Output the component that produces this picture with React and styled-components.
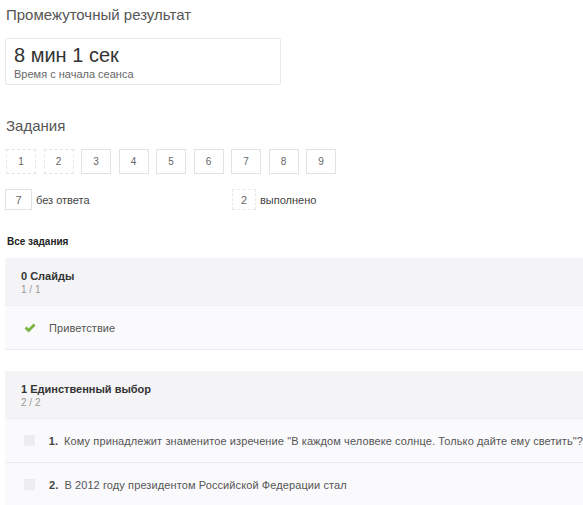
import styled, { createGlobalStyle } from "styled-components";

const tasks = [
  { n: 1, done: true },
  { n: 2, done: true },
  { n: 3 },
  { n: 4 },
  { n: 5 },
  { n: 6 },
  { n: 7 },
  { n: 8 },
  { n: 9 },
];

const sections = [
  {
    title: "0 Слайды",
    count: "1 / 1",
    items: [{ text: "Приветствие", check: true }],
  },
  {
    title: "1 Единственный выбор",
    count: "2 / 2",
    items: [
      {
        num: "1.",
        text: "Кому принадлежит знаменитое изречение \"В каждом человеке солнце. Только дайте ему светить\"?",
      },
      { num: "2.", text: "В 2012 году президентом Российской Федерации стал" },
    ],
  },
];

export default function App() {
  return (
    <>
      <GlobalStyle />
      <Page>
        <Heading>Промежуточный результат</Heading>
        <TimeCard>
          <TimeValue>8 мин 1 сек</TimeValue>
          <TimeLabel>Время с начала сеанса</TimeLabel>
        </TimeCard>

        <Heading $top={32}>Задания</Heading>
        <TaskGrid>
          {tasks.map((t) => (
            <TaskBox key={t.n} $dashed={t.done}>
              {t.n}
            </TaskBox>
          ))}
        </TaskGrid>

        <Legend>
          <LegendItem>
            <LegendBox>7</LegendBox>
            без ответа
          </LegendItem>
          <LegendItem>
            <LegendBox $dashed>2</LegendBox>
            выполнено
          </LegendItem>
        </Legend>

        <AllTitle>Все задания</AllTitle>

        {sections.map((s) => (
          <Section key={s.title}>
            <SectionHead>
              <SectionTitle>{s.title}</SectionTitle>
              <SectionCount>{s.count}</SectionCount>
            </SectionHead>
            {s.items.map((it) => (
              <Row key={it.text}>
                <Mark>
                  {it.check ? (
                    <svg width="12" height="10" viewBox="0 0 12 10">
                      <path
                        d="M0.6 5.4 L2.6 3.4 L4.6 5.4 L9.6 0.4 L11.6 2.4 L4.6 9.4 Z"
                        fill="#7cb342"
                      />
                    </svg>
                  ) : (
                    <Square />
                  )}
                </Mark>
                <RowText>
                  {it.num && <Num>{it.num}</Num>}
                  {it.text}
                </RowText>
              </Row>
            ))}
          </Section>
        ))}
      </Page>
    </>
  );
}

const GlobalStyle = createGlobalStyle`
  body {
    margin: 0;
    background: #fff;
    font-family: "Liberation Sans", Arial, sans-serif;
    color: #333;
    overflow: hidden;
  }
`;

const Page = styled.div`
  padding: 6px 0 0 5px;
  overflow: hidden;
`;

const Heading = styled.div`
  font-size: 15px;
  color: #555;
  line-height: 18px;
  margin: ${(p) => p.$top || 0}px 0 0 1px;
`;

const TimeCard = styled.div`
  width: 258px;
  height: 45px;
  margin-top: 14px;
  border: 1px solid #e8e8e8;
  border-radius: 2px;
  padding: 0 8px;
  display: flex;
  flex-direction: column;
`;

const TimeValue = styled.div`
  font-size: 20px;
  line-height: 22px;
  margin-top: 5px;
  color: #333;
`;

const TimeLabel = styled.div`
  font-size: 11px;
  color: #666;
  margin-top: 2px;
`;

const TaskGrid = styled.div`
  display: flex;
  gap: 7.5px;
  margin-top: 14px;
  padding-left: 1px;
`;

const TaskBox = styled.div`
  width: 30px;
  height: 25px;
  box-sizing: border-box;
  border: 1px ${(p) => (p.$dashed ? "dashed #e4e4e4" : "solid #e2e2e2")};
  display: flex;
  align-items: center;
  justify-content: center;
  font-size: 10px;
  color: #666;
`;

const Legend = styled.div`
  display: grid;
  grid-template-columns: 227px auto;
  margin-top: 15px;
`;

const LegendItem = styled.div`
  display: flex;
  align-items: center;
  gap: 4px;
  font-size: 11px;
  color: #444;
`;

const LegendBox = styled.div`
  width: ${(p) => (p.$dashed ? 24 : 27)}px;
  height: 21px;
  box-sizing: border-box;
  border: 1px ${(p) => (p.$dashed ? "dashed #e8e8e8" : "solid #e2e2e2")};
  display: flex;
  align-items: center;
  justify-content: center;
  font-size: 11px;
  color: #666;
`;

const AllTitle = styled.div`
  font-size: 10px;
  font-weight: bold;
  color: #222;
  margin: 26px 0 0 2px;
`;

const Section = styled.div`
  margin-top: 11px;
  & + & {
    margin-top: 21px;
  }
`;

const SectionHead = styled.div`
  background: #f4f4f6;
  height: 48px;
  box-sizing: border-box;
  padding: 12px 16px 0;
  border-bottom: 1px solid #eeeef0;
`;

const SectionTitle = styled.div`
  font-size: 11px;
  font-weight: bold;
  color: #333;
`;

const SectionCount = styled.div`
  font-size: 10px;
  color: #999;
  margin-top: 2px;
`;

const Row = styled.div`
  background: #fafafc;
  height: 44px;
  box-sizing: border-box;
  border-bottom: 1px solid #ececee;
  display: flex;
  align-items: center;
  padding-left: 19px;
  white-space: nowrap;
`;

const Mark = styled.div`
  width: 25px;
  display: flex;
  align-items: center;
`;

const Square = styled.div`
  width: 11px;
  height: 11px;
  background: #ededef;
`;

const RowText = styled.div`
  font-size: 11px;
  letter-spacing: 0.1px;
  color: #555;
`;

const Num = styled.span`
  font-weight: bold;
  color: #444;
  margin-right: 6px;
`;
